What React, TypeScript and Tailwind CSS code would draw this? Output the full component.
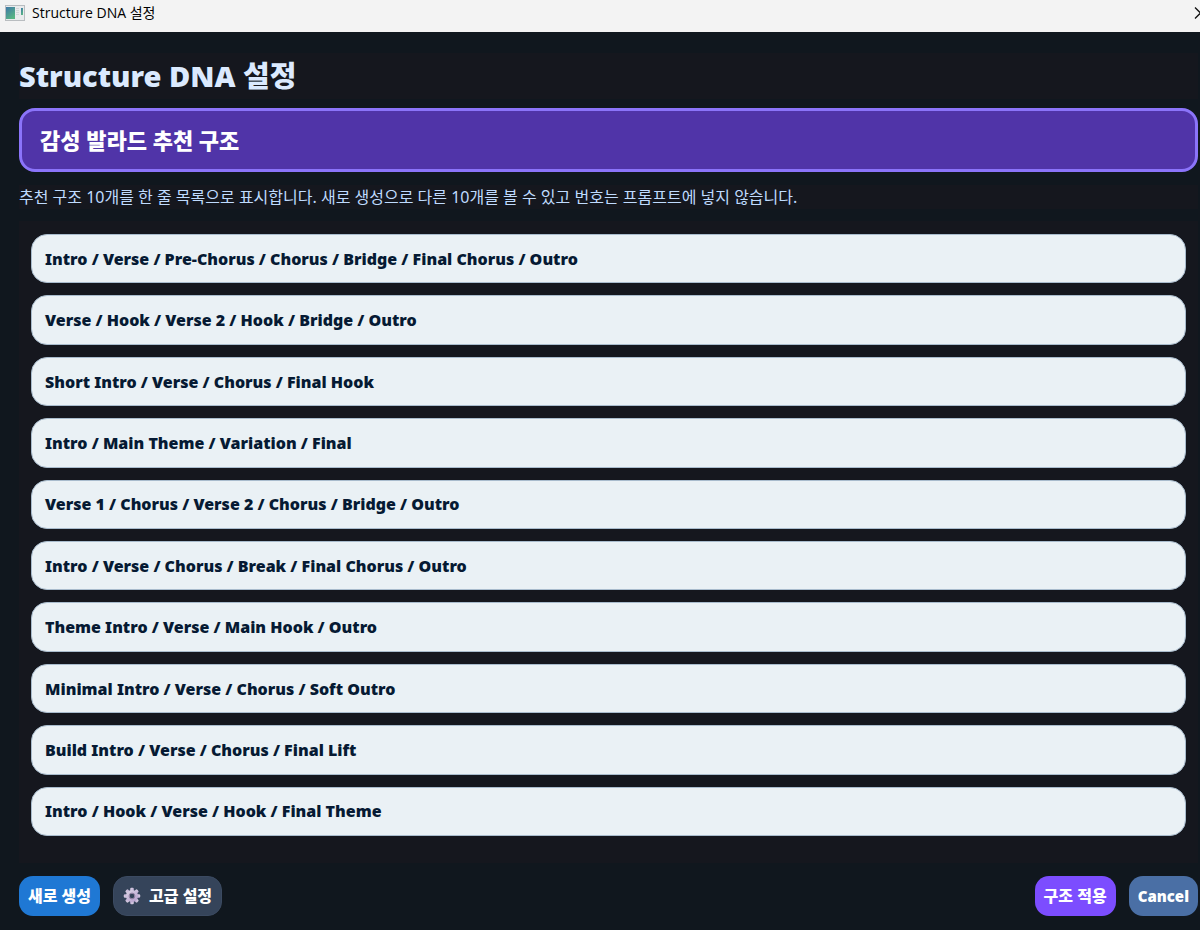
import React from "react";

const structures: string[] = [
  "Intro / Verse / Pre-Chorus / Chorus / Bridge / Final Chorus / Outro",
  "Verse / Hook / Verse 2 / Hook / Bridge / Outro",
  "Short Intro / Verse / Chorus / Final Hook",
  "Intro / Main Theme / Variation / Final",
  "Verse 1 / Chorus / Verse 2 / Chorus / Bridge / Outro",
  "Intro / Verse / Chorus / Break / Final Chorus / Outro",
  "Theme Intro / Verse / Main Hook / Outro",
  "Minimal Intro / Verse / Chorus / Soft Outro",
  "Build Intro / Verse / Chorus / Final Lift",
  "Intro / Hook / Verse / Hook / Final Theme",
];

function AppIcon() {
  return (
    <svg width="20" height="16" viewBox="0 0 20 16" aria-hidden="true">
      <defs>
        <linearGradient id="screen" x1="0" y1="0" x2="0.6" y2="1">
          <stop offset="0" stopColor="#3f78a8" />
          <stop offset="1" stopColor="#58b583" />
        </linearGradient>
      </defs>
      <rect x="0.5" y="0.5" width="19" height="15" fill="#e9ebec" stroke="#b9bdc0" />
      <rect x="1" y="2" width="9" height="12" fill="url(#screen)" />
      <path d="M11 3.5h3M11 5.5h3M11 7.5h3M11 9.5h3" stroke="#d3d6d8" />
      <rect x="16" y="3" width="2" height="7" fill="url(#screen)" />
    </svg>
  );
}

function GearIcon() {
  const teeth = [0, 45, 90, 135, 180, 225, 270, 315];
  return (
    <svg width="18" height="18" viewBox="0 0 18 18" aria-hidden="true">
      <defs>
        <linearGradient id="gear" x1="0" y1="0" x2="0.7" y2="1">
          <stop offset="0" stopColor="#dcd6e6" />
          <stop offset="1" stopColor="#b9a3cf" />
        </linearGradient>
      </defs>
      <g fill="url(#gear)">
        {teeth.map((angle) => (
          <rect key={angle} x="7.2" y="0.8" width="3.6" height="4.5" rx="1.2" transform={`rotate(${angle} 9 9)`} />
        ))}
        <path fillRule="evenodd" d="M9 2.9a6.1 6.1 0 1 0 0 12.2a6.1 6.1 0 1 0 0-12.2zM9 6.6a2.4 2.4 0 1 1 0 4.8a2.4 2.4 0 1 1 0-4.8z" />
      </g>
      <circle cx="9" cy="9" r="2.9" fill="none" stroke="#8d7f9f" strokeWidth="1" />
    </svg>
  );
}

export default function App() {
  return (
    <div className="flex min-h-screen flex-col overflow-x-hidden bg-[#10171e] font-['Noto_Sans','Noto_Sans_CJK_KR',sans-serif]">
      <header className="flex h-8 items-start justify-between bg-[#f3f3f3] pl-[5px] text-black">
        <div className="flex items-center gap-[7px] pt-[3px]">
          <AppIcon />
          <span className="font-['Open_Sans','Noto_Sans_CJK_KR',sans-serif] text-sm leading-5">Structure DNA 설정</span>
        </div>
        <button type="button" aria-label="닫기" className="-mr-2 mt-[7px]">
          <svg width="14" height="12" viewBox="0 0 14 12" aria-hidden="true">
            <path d="M1 0.5L12 11.5M12 0.5L1 11.5" stroke="#111111" strokeWidth="1.3" fill="none" />
          </svg>
        </button>
      </header>

      <main className="flex flex-1 flex-col pt-[21px] pr-[2px] pb-[14px] pl-[19px]">
        <h1 className="bg-[#15171e] text-[29px] leading-[46px] font-black text-[#dbeafe]">Structure DNA 설정</h1>

        <section className="mt-[9px] rounded-2xl border-[3px] border-[#8b74fa] bg-[#5034a8] px-[18px] py-[10px]">
          <h2 className="text-[22px] leading-[38px] font-black text-white">감성 발라드 추천 구조</h2>
        </section>

        <p className="mt-[13px] bg-[#15171e] text-base leading-6 text-[#bfdbfe]">
          추천 구조 10개를 한 줄 목록으로 표시합니다. 새로 생성으로 다른 10개를 볼 수 있고 번호는 프롬프트에 넣지 않습니다.
        </p>

        <ul className="mt-3 flex flex-1 flex-col gap-3 bg-[#15171e] px-3 pt-[13px] pb-[27px]">
          {structures.map((structure) => (
            <li key={structure} className="flex flex-1">
              <button
                type="button"
                className="flex-1 rounded-2xl border border-[#a9bccd] bg-[#eaf1f5] px-[13px] py-2 text-left text-base leading-6 font-black text-[#061a33]"
              >
                {structure}
              </button>
            </li>
          ))}
        </ul>

        <footer className="mt-[13px] flex items-center justify-between text-base leading-6 font-black text-white">
          <div className="flex gap-[13px]">
            <button type="button" className="rounded-[14px] bg-[#1f78d4] px-[9px] py-2">새로 생성</button>
            <button type="button" className="flex items-center gap-2 rounded-[14px] border border-[#3b4a61] bg-[#35445a] px-[9px] py-[7px]">
              <GearIcon />
              고급 설정
            </button>
          </div>
          <div className="flex gap-[13px]">
            <button type="button" className="rounded-[14px] bg-[#7c4dff] px-[9px] py-2">구조 적용</button>
            <button type="button" className="rounded-[14px] bg-[#4a6fa5] px-[9px] py-2 text-[15px]">Cancel</button>
          </div>
        </footer>
      </main>
    </div>
  );
}
